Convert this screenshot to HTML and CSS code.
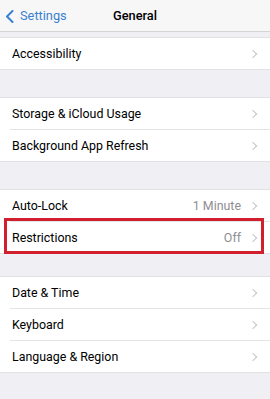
FILE: index.html
```html
<!DOCTYPE html>
<html>
<head>
<meta charset="utf-8">
<link rel="stylesheet" href="styles.css">
</head>
<body>
<div class="nav">
  <div class="back">
    <svg class="back-icon" width="9" height="13" viewBox="0 0 9 13"><polyline points="7.5,1 2,6.5 7.5,12" fill="none" stroke="#3a7fd0" stroke-width="2" stroke-linecap="round" stroke-linejoin="round"/></svg>
    <span>Settings</span>
  </div>
  <div class="title">General</div>
</div>

<div class="group first">
  <div class="row"><span class="label">Accessibility</span><span class="chev"></span></div>
</div>

<div class="group">
  <div class="row"><span class="label">Storage &amp; iCloud Usage</span><span class="chev"></span></div>
  <div class="row"><span class="label">Background App Refresh</span><span class="chev"></span></div>
</div>

<div class="group">
  <div class="row"><span class="label">Auto-Lock</span><span class="detail">1 Minute</span><span class="chev"></span></div>
  <div class="row highlighted"><span class="label">Restrictions</span><span class="detail">Off</span><span class="chev"></span><div class="redbox"></div></div>
</div>

<div class="group short-gap">
  <div class="row"><span class="label">Date &amp; Time</span><span class="chev"></span></div>
  <div class="row"><span class="label">Keyboard</span><span class="chev"></span></div>
  <div class="row"><span class="label">Language &amp; Region</span><span class="chev"></span></div>
</div>
</body>
</html>
```
FILE: styles.css
```css
html, body {
  margin: 0;
  padding: 0;
}
body {
  width: 270px;
  height: 399px;
  overflow: hidden;
  background: #efeff4;
  font-family: Roboto, "Liberation Sans", Arial, sans-serif;
  font-size: 12.4px;
  color: #000;
}
.nav {
  height: 31px;
  border-bottom: 1px solid #d4d4d8;
  background: #f7f7f8;
  display: flex;
  align-items: center;
  justify-content: center;
  position: relative;
}
.back {
  position: absolute;
  left: 5px;
  top: 0;
  height: 31px;
  display: flex;
  align-items: center;
  gap: 6px;
  color: #3a7fd0;
  font-size: 12.8px;
}
.back-icon {
  margin-top: 1px;
}
.title {
  font-weight: 500;
  font-size: 12.8px;
  color: #000;
}
.group {
  margin-top: 27px;
  background: #fff;
  border-top: 1px solid #e2e2e6;
  border-bottom: 1px solid #e2e2e6;
}
.group.first {
  margin-top: 5px;
}
.group.short-gap {
  margin-top: 22px;
}
.row {
  height: 31px;
  display: flex;
  align-items: center;
  padding: 0 11px 0 12px;
  position: relative;
}
.row + .row::before {
  content: "";
  position: absolute;
  left: 10px;
  right: 0;
  top: -1px;
  height: 1px;
  background: #e4e4e7;
}
.row + .row {
  margin-top: 1px;
}
.label {
  flex: 1;
}
.detail {
  color: #8e8e93;
  margin-right: 9px;
}
.chev {
  width: 5px;
  height: 5px;
  border-right: 1.5px solid #c5c5ca;
  border-top: 1.5px solid #c5c5ca;
  transform: rotate(45deg);
  margin-right: 3px;
}
.redbox {
  position: absolute;
  left: 4px;
  right: 6px;
  top: -4px;
  bottom: -1px;
  border: 3px solid #d11f2e;
}
```
